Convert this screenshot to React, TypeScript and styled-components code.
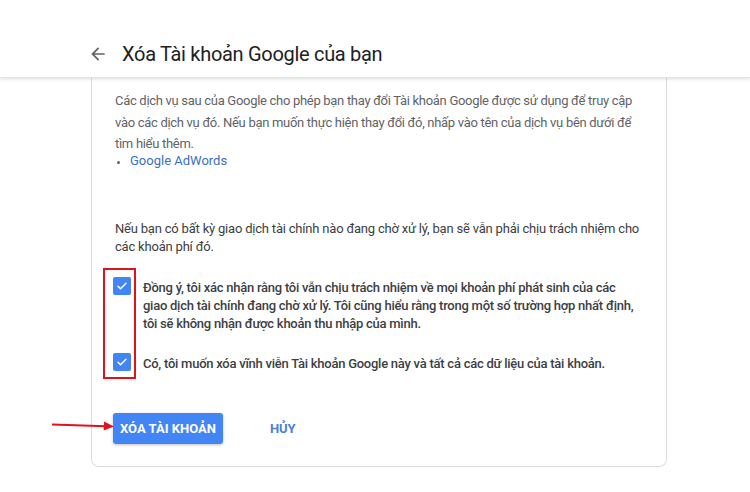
import styled, { createGlobalStyle } from "styled-components";

const GlobalStyle = createGlobalStyle`
  html, body {
    margin: 0;
    padding: 0;
    background: #fff;
    font-family: Roboto, "Liberation Sans", Arial, sans-serif;
  }
`;

const consents = [
  "Đồng ý, tôi xác nhận rằng tôi vẫn chịu trách nhiệm về mọi khoản phí phát sinh của các giao dịch tài chính đang chờ xử lý. Tôi cũng hiểu rằng trong một số trường hợp nhất định, tôi sẽ không nhận được khoản thu nhập của mình.",
  "Có, tôi muốn xóa vĩnh viễn Tài khoản Google này và tất cả các dữ liệu của tài khoản.",
];

const CheckIcon = () => (
  <svg width="12" height="12" viewBox="0 0 24 24">
    <path d="M4 12.5l5 5L20 6.5" fill="none" stroke="#fff" strokeWidth="3" strokeLinecap="round" strokeLinejoin="round" />
  </svg>
);

const App = () => {
  return (
    <Page>
      <GlobalStyle />
      <Header>
        <BackArrow viewBox="0 0 24 24">
          <path d="M20 11H7.83l5.59-5.59L12 4l-8 8 8 8 1.41-1.41L7.83 13H20v-2z" fill="#5f6368" />
        </BackArrow>
        <Title>Xóa Tài khoản Google của bạn</Title>
      </Header>
      <Card>
        <Intro>
          Các dịch vụ sau của Google cho phép bạn thay đổi Tài khoản Google được sử dụng để truy cập
          vào các dịch vụ đó. Nếu bạn muốn thực hiện thay đổi đó, nhấp vào tên của dịch vụ bên dưới để
          tìm hiểu thêm.
        </Intro>
        <ServiceList>
          <li>
            <a href="#">Google AdWords</a>
          </li>
        </ServiceList>
        <Notice>
          Nếu bạn có bất kỳ giao dịch tài chính nào đang chờ xử lý, bạn sẽ vẫn phải chịu trách nhiệm cho
          các khoản phí đó.
        </Notice>
        <ConsentList>
          <Highlight />
          {consents.map((text) => (
            <ConsentRow key={text}>
              <Box>
                <CheckIcon />
              </Box>
              <ConsentText>{text}</ConsentText>
            </ConsentRow>
          ))}
        </ConsentList>
        <Actions>
          <Pointer viewBox="0 0 64 12">
            <path d="M0 4.5L54 6.3" stroke="#e0131b" strokeWidth="2" fill="none" />
            <path d="M52 1.5L62 6.6L51.7 10.5z" fill="#e0131b" />
          </Pointer>
          <PrimaryButton>XÓA TÀI KHOẢN</PrimaryButton>
          <TextButton>HỦY</TextButton>
        </Actions>
      </Card>
    </Page>
  );
};

export default App;

const Page = styled.div`
  width: 750px;
  height: 492px;
  overflow: hidden;
  background: #fff;
`;

const Header = styled.header`
  height: 78px;
  display: flex;
  align-items: center;
  gap: 14px;
  padding: 30px 0 0 88px;
  box-sizing: border-box;
  border-bottom: 1px solid #e4e4e4;
  box-shadow: 0 1px 3px rgba(60, 64, 67, 0.18);
  position: relative;
  z-index: 1;
`;

const BackArrow = styled.svg`
  width: 20px;
  height: 20px;
`;

const Title = styled.h1`
  margin: 0;
  font-size: 20px;
  font-weight: 400;
  color: #202124;
  letter-spacing: -0.3px;
`;

const Card = styled.section`
  margin-left: 91px;
  width: 576px;
  box-sizing: border-box;
  border: 1px solid #dadce0;
  border-top: none;
  border-radius: 0 0 8px 8px;
  padding: 12px 24px 22px 23px;
`;

const Intro = styled.p`
  margin: 0;
  font-size: 13px;
  line-height: 21.5px;
  letter-spacing: -0.3px;
  color: #5f6368;
`;

const ServiceList = styled.ul`
  margin: 0;
  padding-left: 15px;
  font-size: 13px;
  line-height: 12px;
  color: #5f6368;
  li::marker {
    font-size: 11px;
  }
  a {
    color: #3a6fc4;
    text-decoration: none;
  }
`;

const Notice = styled.p`
  margin: 53px 0 0;
  font-size: 13px;
  line-height: 18px;
  letter-spacing: -0.2px;
  color: #3c4043;
`;

const ConsentList = styled.div`
  position: relative;
  margin: 21px 0 0 -2px;
  display: flex;
  flex-direction: column;
  gap: 20px;
`;

const Highlight = styled.div`
  position: absolute;
  left: -10px;
  top: -9px;
  width: 33px;
  height: 111px;
  border: 2px solid #e0131b;
  box-sizing: border-box;
`;

const ConsentRow = styled.div`
  display: flex;
  align-items: flex-start;
  gap: 12px;
`;

const Box = styled.span`
  flex: none;
  width: 18px;
  height: 18px;
  border-radius: 2px;
  background: #4285f4;
  display: flex;
  align-items: center;
  justify-content: center;
`;

const ConsentText = styled.span`
  font-size: 13px;
  line-height: 18px;
  font-weight: 500;
  letter-spacing: -0.25px;
  color: #3c4043;
  padding-top: 2px;
`;

const Actions = styled.div`
  position: relative;
  margin: 40px 0 0 -2px;
  display: flex;
  align-items: center;
  gap: 47px;
`;

const Pointer = styled.svg`
  position: absolute;
  left: -61px;
  top: 7px;
  width: 64px;
  height: 12px;
`;

const PrimaryButton = styled.button`
  height: 31px;
  padding: 0 7px;
  border: none;
  border-radius: 3px;
  background: #4285f4;
  color: #fff;
  font-family: inherit;
  font-size: 13px;
  font-weight: 700;
  box-shadow: 0 1px 3px rgba(0, 0, 0, 0.25);
`;

const TextButton = styled.button`
  border: none;
  background: none;
  padding: 0;
  color: #4a7fd4;
  font-family: inherit;
  font-size: 13px;
  font-weight: 700;
`;
